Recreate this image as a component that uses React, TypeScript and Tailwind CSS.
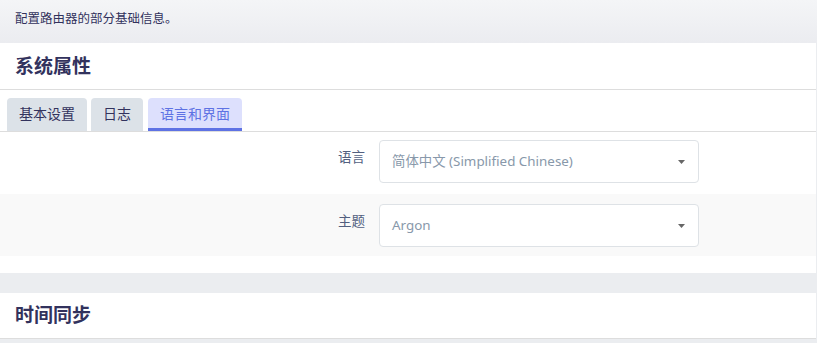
const FONT = { fontFamily: '"Noto Sans", "Noto Sans CJK SC", sans-serif' };

function Select({ value }: { value: string }) {
  return (
    <div className="w-[320px] h-[43px] border border-[#dee2e6] rounded-[4px] bg-white flex items-center justify-between pl-[12px] pr-[13px]">
      <span className="text-[13.4px] text-[#8898aa]">{value}</span>
      <svg width="7" height="4" viewBox="0 0 7 4">
        <path d="M0 0h7L3.5 4z" fill="#666" />
      </svg>
    </div>
  );
}

function Row({ label, value, shaded, top }: { label: string; value: string; shaded?: boolean; top: string }) {
  return (
    <div className={`flex items-start h-[62px] ${top} ${shaded ? "bg-[#f9f9f9]" : "bg-white"}`}>
      <div className="w-[365px] text-right text-[13.5px] text-[#525f7f] pt-[7px]">{label}</div>
      <div className="ml-[14px]">
        <Select value={value} />
      </div>
    </div>
  );
}

export default function App() {
  const tabs = ["基本设置", "日志", "语言和界面"];
  return (
    <div style={FONT} className="w-[817px] h-[343px] overflow-hidden bg-[#ebedf0]">
      <div className="h-[43px] bg-gradient-to-b from-[#f4f5f7] to-[#ebecf0] flex items-center px-[15px]">
        <span className="text-[12.5px] text-[#32325d] -mt-[4px]">配置路由器的部分基础信息。</span>
      </div>

      <div className="bg-white w-[816px]">
        <div className="h-[47px] flex items-center px-[15px] border-b border-[#dddddd]">
          <h2 className="text-[19px] font-bold text-[#32325d]">系统属性</h2>
        </div>
        <div className="flex items-end pl-[7px] pt-[8px] border-b border-[#dddddd]">
          {tabs.map((t, i) => {
            const active = i === 2;
            return (
              <div
                key={t}
                className={`h-[33px] px-[12px] flex items-center rounded-t-[4px] text-[14px] ${
                  active
                    ? "bg-[#dde0fd] text-[#5e72e4] border-b-[3px] border-[#5e72e4] pt-[1px] ml-[5px]"
                    : "bg-[#dce2e8] text-[#32325d] pb-[2px]"
                } ${i === 1 ? "ml-[4px]" : ""}`}
              >
                {t}
              </div>
            );
          })}
        </div>
        <Row label="语言" value="简体中文 (Simplified Chinese)" top="pt-[8px]" />
        <Row label="主题" value="Argon" shaded top="pt-[10px]" />
        <div className="h-[17px] bg-white" />
      </div>

      <div className="h-[20px]" />

      <div className="bg-white w-[816px]">
        <div className="h-[46px] flex items-center px-[15px] border-b border-[#dddddd]">
          <h2 className="text-[19px] font-bold text-[#32325d]">时间同步</h2>
        </div>
      </div>
    </div>
  );
}
